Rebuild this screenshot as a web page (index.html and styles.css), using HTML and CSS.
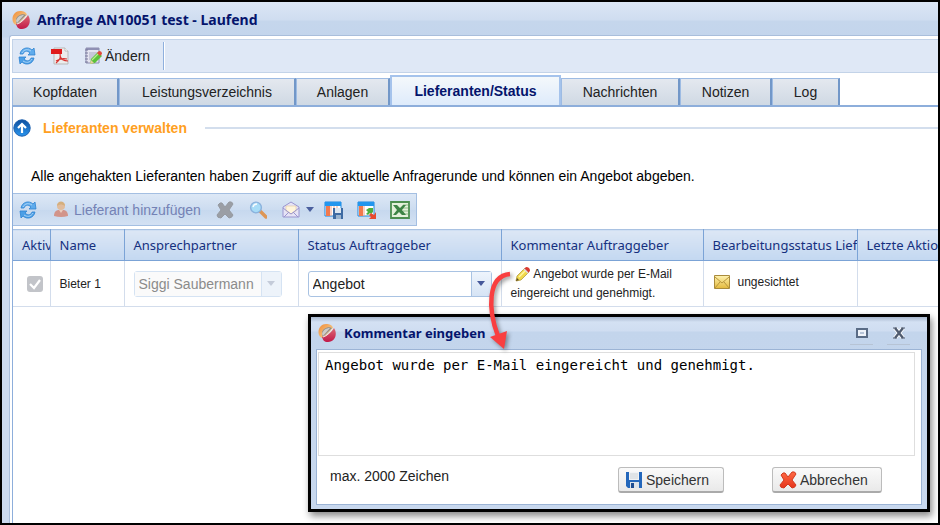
FILE: index.html
```html
<!DOCTYPE html>
<html lang="de">
<head>
<meta charset="utf-8">
<title>Anfrage AN10051 test - Laufend</title>
<link rel="stylesheet" href="styles.css">
</head>
<body>
<svg class="defs" aria-hidden="true">
  <defs>
    <linearGradient id="gOrange" x1="0" y1="0" x2="1" y2="1"><stop offset="0" stop-color="#ef8a35"/><stop offset=".6" stop-color="#f5be78"/><stop offset="1" stop-color="#d9c3a2"/></linearGradient>
    <linearGradient id="gRed" x1="0" y1="0" x2="0" y2="1"><stop offset="0" stop-color="#dc6a74"/><stop offset="1" stop-color="#c21848"/></linearGradient>
    <linearGradient id="gBall" x1="0" y1="0" x2="0" y2="1"><stop offset="0" stop-color="#0e4f9e"/><stop offset="1" stop-color="#2a95ee"/></linearGradient>
    <linearGradient id="gMail" x1="0" y1="0" x2="0" y2="1"><stop offset="0" stop-color="#fff3b0"/><stop offset="1" stop-color="#e3b93c"/></linearGradient>
    <linearGradient id="gCross" x1="0" y1="0" x2="0" y2="1"><stop offset="0" stop-color="#ff6a45"/><stop offset="1" stop-color="#e5341a"/></linearGradient>
  </defs>
  <symbol id="logo" viewBox="0 0 18 18">
    <path d="M1 11C-1 5 3 0 8 0c4 0 6 1 7 4L5 14c-2 0-3-1-4-3z" fill="url(#gOrange)"/>
    <path d="M4 9c0-4 6-7 10-5L5 13c-1-1-1-2-1-4z" fill="#8f8d8b"/>
    <path d="M4 10c1-4 4-6 8-6L5 12z" fill="#cfccc8"/>
    <path d="M16 4c4 6 1 14-6 14-4 0-5-2-6-5C8 12 14 8 16 4z" fill="url(#gRed)"/>
    <path d="M14.500 4.500C13 8 9 12 5 13" fill="none" stroke="#f4ebe6" stroke-width="1"/>
  </symbol>
  <symbol id="refresh" viewBox="0 0 18 18">
    <path d="M2 7C3 1 10-1 14 3l2-2 1 7h-7l2-2C9 3 6 4 5 7z" fill="#5fabec" stroke="#2f84d2" stroke-width=".8"/>
    <path d="M16 11c-1 6-8 8-12 4l-2 2-1-7h7l-2 2c3 3 6 2 7-1z" fill="#4c9fe6" stroke="#2f84d2" stroke-width=".8"/>
    <path d="M4 6c2-4 6-4 9-2M14 12c-2 4-6 4-9 2" fill="none" stroke="#a9d4f7"/>
  </symbol>
  <symbol id="floppy" viewBox="0 0 18 18">
    <path d="M1 1h16v16H3l-2-2z" fill="#2467bb"/>
    <path d="M4 1h10v8H4z" fill="#f1f3f5"/><path d="M5 3h8M5 5h8M5 7h8" stroke="#c6cbd0" stroke-width=".8"/>
    <path d="M5 11h9v6H5z" fill="#dce3ea"/><path d="M6 12h3v5H6z" fill="#1d4c91"/>
  </symbol>
  <symbol id="cross" viewBox="0 0 18 18">
    <path d="M2 4q2-3 4-2l3 4 4-5q3-1 4 2l-4 6 4 5q-1 3-4 3l-4-4-4 4q-4 0-4-3l4-5z" stroke-linejoin="round"/>
  </symbol>
</svg>

<div class="window">
  <header class="titlebar">
    <svg class="logo"><use href="#logo"/></svg>
    <h1>Anfrage AN10051 test - Laufend</h1>
  </header>

  <main class="content">
    <div class="toolbar">
      <button class="tool" aria-label="Aktualisieren"><svg class="icon"><use href="#refresh"/></svg></button>
      <button class="tool" aria-label="PDF">
        <svg class="icon" viewBox="0 0 18 18"><path d="M3 1h11l3 3v13H3z" fill="#ececec" stroke="#b9b9b9"/><path d="M14 1v3h3" fill="#fff" stroke="#aaa" stroke-width=".7"/><path d="M0 2h11v5H0z" fill="#e01b1b"/><path d="M9 7c1 4-1 7-4 9M9 9c1 3 4 5 8 5M5 14c3-2 7-3 11-2" fill="none" stroke="#d8302c" stroke-width="1.200"/></svg>
      </button>
      <button class="tool tool-text">
        <svg class="icon" viewBox="0 0 18 18"><path d="M2 1h13v15H2z" fill="#e4e4f0" stroke="#8c8cae"/><path d="M2 1h13v2H2z" fill="#8f90b4"/><path d="M1 3h3M1 6h3M1 9h3M1 12h3M1 15h3" stroke="#77789b"/><path d="M5 6h8M5 8h7M5 10h5M5 12h3" stroke="#a9aac2"/><path d="M6 17l1-5 7-7 4 4-7 7z" fill="#5cc13a"/><path d="M8 13l7-7" stroke="#b5ee8c" stroke-width="1.3"/><path d="M13 6l2-2q3 0 3 3l-2 2z" fill="#e04a3c"/><path d="M6 17l1-4 3 3z" fill="#e5cf9d"/></svg>
        Ändern
      </button>
      <span class="separator"></span>
    </div>

    <nav class="tabs">
      <button class="tab tab-kopf">Kopfdaten</button>
      <button class="tab tab-leist">Leistungsverzeichnis</button>
      <button class="tab tab-anl">Anlagen</button>
      <button class="tab tab-status active">Lieferanten/Status</button>
      <button class="tab tab-nachr">Nachrichten</button>
      <button class="tab tab-notiz">Notizen</button>
      <button class="tab tab-log">Log</button>
    </nav>

    <section class="panel">
      <div class="legend">
        <svg class="collapse" viewBox="0 0 18 18"><circle cx="9" cy="9" r="8.2" fill="url(#gBall)" stroke="#1b5fae"/><path d="M9 14V5M5 9l4-4 4 4" fill="none" stroke="#fff" stroke-width="2.2"/></svg>
        <h2>Lieferanten verwalten</h2>
        <span class="rule"></span>
      </div>
      <p class="hint">Alle angehakten Lieferanten haben Zugriff auf die aktuelle Anfragerunde und können ein Angebot abgeben.</p>

      <div class="gridbar">
        <button class="tool" aria-label="Aktualisieren"><svg class="icon"><use href="#refresh"/></svg></button>
        <button class="tool add" disabled>
          <svg class="icon" viewBox="0 0 18 18"><path d="M2 15c0-4 2-6 5-6h4c3 0 5 2 5 6q-7 2-14 0z" fill="#d38d80"/><path d="M7 9l2 3 2-3z" fill="#efcbb9"/><circle cx="9" cy="5" r="4" fill="#e3b994"/><path d="M5 5c0-6 8-6 8 0-3-2-5-2-8 0z" fill="#d5aa72"/></svg>
          Lieferant hinzufügen
        </button>
        <button class="tool" aria-label="Löschen" disabled><svg class="icon" fill="#9a9ea5" stroke="#969aa1"><use href="#cross"/></svg></button>
        <button class="tool search" aria-label="Suchen">
          <svg class="icon" viewBox="0 0 18 18"><path d="M11 10l6 6" stroke="#e08f45" stroke-width="3.500" stroke-linecap="round"/><circle cx="7" cy="6.500" r="5.400" fill="#a3dcf8" stroke="#84addb" stroke-width="1.400"/><path d="M4 6q1-3 4-3" fill="none" stroke="#fff" stroke-width="1.500"/></svg>
        </button>
        <button class="tool mail" aria-label="E-Mail">
          <svg class="icon" viewBox="0 0 18 18"><path d="M1 6l8-5 8 5v10H1z" fill="#e6e3f6" stroke="#9a95cf"/><path d="M4 5h10v5l-5 3-5-3z" fill="#fff5dc" stroke="#e0c79d" stroke-width=".6"/><path d="M1 7l8 6 8-6M2 16l5-5M16 16l-5-5" fill="none" stroke="#9a95cf"/></svg>
          <svg class="caret" viewBox="0 0 8 5"><path d="M0 0h8L4 5z" fill="#4b5f9e"/></svg>
        </button>
        <div class="views">
          <button class="tool" aria-label="Ansicht speichern">
            <svg class="icon wide" viewBox="0 0 20 18"><path d="M1 1h16v14H1z" fill="#fff" stroke="#1e87dd"/><path d="M1 1h16v4H1z" fill="#2296ee"/><path d="M2 5h4v10H2z" fill="#f2794c"/><path d="M7 5v10M10 5v10M13 5v10" stroke="#f2a58a"/><path d="M9 7h10v11H9z" fill="#3e6ba3"/><path d="M11 7h6v5h-6z" fill="#dde7f1"/><path d="M12 14h5v4h-5z" fill="#9bb4cf"/></svg>
          </button>
          <button class="tool" aria-label="Ansicht zurücksetzen">
            <svg class="icon wide" viewBox="0 0 20 18"><path d="M1 1h16v14H1z" fill="#fff" stroke="#1e87dd"/><path d="M1 1h16v4H1z" fill="#2296ee"/><path d="M2 5h4v10H2z" fill="#f2794c"/><path d="M7 5v10" stroke="#f2a58a"/><path d="M9 13l2-2-2-2 3-2h4v4l-2 2-1-1-2 2z" fill="#4cae3d"/><path d="M19 11v7h-7l2-2-2-2 2-2 3 2z" fill="#e84a2e"/></svg>
          </button>
          <button class="tool" aria-label="Excel">
            <svg class="icon wide" viewBox="0 0 20 18"><path d="M1 1h18v16H1z" fill="#e4f1dc" stroke="#4c8f50" stroke-width="1.800"/><path d="M13 4h5M13 7h5M13 10h5M13 13h5" stroke="#8dba87"/><path d="M3 4h4l3 3 3-3h3l-4 5 4 5h-4l-3-3-3 3H3l4-5z" fill="#3d8446"/></svg>
          </button>
        </div>
      </div>

      <table class="grid">
        <colgroup><col class="c-aktiv"><col class="c-name"><col class="c-partner"><col class="c-status"><col class="c-komm"><col class="c-bearb"><col></colgroup>
        <thead>
          <tr><th>Aktiv</th><th>Name</th><th>Ansprechpartner</th><th>Status Auftraggeber</th><th>Kommentar Auftraggeber</th><th>Bearbeitungsstatus Lieferant</th><th>Letzte Aktion</th></tr>
        </thead>
        <tbody>
          <tr>
            <td class="check"><label><input type="checkbox" checked disabled aria-label="Aktiv"><svg viewBox="0 0 16 16"><path d="M3 8l4 4 6-8" fill="none" stroke="#fff" stroke-width="2.200"/></svg></label></td>
            <td>Bieter 1</td>
            <td><div class="combo off"><select aria-label="Ansprechpartner" disabled><option>Siggi Saubermann</option></select><span class="trigger"><svg class="caret" viewBox="0 0 8 5"><path d="M0 0h8L4 5z" fill="#a9b2c4"/></svg></span></div></td>
            <td><div class="combo"><select aria-label="Status Auftraggeber"><option>Angebot</option></select><span class="trigger"><svg class="caret" viewBox="0 0 8 5"><path d="M0 0h8L4 5z" fill="#45589a"/></svg></span></div></td>
            <td class="comment"><svg class="pencil" viewBox="0 0 16 16"><path d="M1 15l1-5 8-8 4 4-8 8z" fill="#f1d84b" stroke="#a99133" stroke-width=".7"/><path d="M4 11l7-7" stroke="#fff6a8" stroke-width="1.500"/><path d="M9 3l2-2q4 0 4 4l-2 2z" fill="#d93b32"/><path d="M9 3l4 4" stroke="#ddd" stroke-width="1.500"/><path d="M1 15l1-3 2 2z" fill="#5d4a22"/></svg> Angebot wurde per E-Mail eingereicht und genehmigt.</td>
            <td><div class="state"><svg viewBox="0 0 16 14"><path d="M.5.500h15v13H.5z" fill="url(#gMail)" stroke="#a98b3c"/><path d="M1 2l7 6 7-6M1 13l5-6M15 13l-5-6" fill="none" stroke="#b8963c"/></svg>ungesichtet</div></td>
            <td></td>
          </tr>
        </tbody>
      </table>
    </section>
  </main>

  <section class="dialog" role="dialog" aria-labelledby="dialog-title">
    <header class="dialog-head">
      <svg class="logo"><use href="#logo"/></svg>
      <h2 id="dialog-title">Kommentar eingeben</h2>
      <button class="win" aria-label="Maximieren"><svg viewBox="0 0 12 12"><path d="M1 2h10v8H1z" fill="#eef3fa" stroke="#5a6c86" stroke-width="2"/><path d="M4 5h4v2H4z" fill="#b6c4d8"/></svg></button>
      <button class="win" aria-label="Schließen"><svg viewBox="0 0 12 12"><path d="M2 1l8 10M10 1L2 11" stroke="#fff" stroke-width="4"/><path d="M2 1l8 10M10 1L2 11" stroke="#505c70" stroke-width="2.400"/><path d="M0 1h4M8 1h4M0 11h4M8 11h4" stroke="#505c70" stroke-width="1.200"/></svg></button>
    </header>
    <div class="dialog-body">
      <textarea aria-label="Kommentar" spellcheck="false">Angebot wurde per E-Mail eingereicht und genehmigt.</textarea>
      <footer>
        <span class="limit">max. 2000 Zeichen</span>
        <button class="action save"><svg class="icon"><use href="#floppy"/></svg>Speichern</button>
        <button class="action cancel"><svg class="icon" fill="url(#gCross)" stroke="#d13a20"><use href="#cross"/></svg>Abbrechen</button>
      </footer>
    </div>
  </section>

  <svg class="arrow" viewBox="0 0 40 90" aria-hidden="true"><path d="M32 10C9 12 10 46 20 72" fill="none" stroke="#f93f40" stroke-width="4.500"/><path d="M12 73l17-6-3 18z" fill="#f93f40"/></svg>
</div>
</body>
</html>
```
FILE: styles.css
```css
* { box-sizing: border-box; }

body {
  margin: 0;
  font: 14px/16px "Liberation Sans", Arial, sans-serif;
  color: #222;
}

h1, h2, p { margin: 0; }
button { font: inherit; color: inherit; }
svg { display: block; flex: none; }
.defs { position: absolute; width: 0; height: 0; }

.window {
  position: relative;
  min-height: 100vh;
  display: flex;
  flex-direction: column;
  overflow: hidden;
  border: 2px solid #000;
  padding-left: 7px;
  background: linear-gradient(#dbe6f5 0, #cfddf0 18px, #c5d6ec 19px, #c3d5ec 35px, #cbdaef 36px);
}

.titlebar {
  display: flex;
  align-items: center;
  gap: 7px;
  height: 33px;
  padding: 2px 3px 0;
}

.logo { width: 18px; height: 18px; }

h1, .dialog h2 {
  font: bold 14px/18px "Noto Sans", "Open Sans", sans-serif;
  color: #04146c;
}

.dialog h2 { font-size: 13px; }

.content {
  flex: 1;
  display: flex;
  flex-direction: column;
  min-width: 0;
  padding: 3px 0 0 2px;
  border: 1px solid #a9bedb;
  border-width: 1px 0 0 1px;
  border-top-left-radius: 3px;
  background: #fff;
}

.toolbar {
  display: flex;
  align-items: center;
  height: 34px;
  padding: 0 5px;
  gap: 15px;
  background: #dfe8f6;
  border: 1px solid #c3d3e8;
  border-right: 0;
}

.tool {
  display: flex;
  align-items: center;
  gap: 4px;
  padding: 0;
  border: 0;
  background: none;
}

.tool-text { gap: 3px; }

.icon { width: 18px; height: 18px; }
.icon.wide { width: 20px; }
.caret { width: 8px; height: 5px; }

.separator {
  width: 2px;
  height: 28px;
  margin-left: -2px;
  background: #fff;
  border-left: 1px solid #8fb0de;
}

.tabs {
  display: flex;
  align-items: flex-end;
  height: 34px;
  border-bottom: 2px solid #8daedb;
}

.tab {
  height: 27px;
  padding: 0;
  border: 1px solid #9dbbe3;
  border-right: 2px solid #7297c8;
  border-bottom: 0;
  background: linear-gradient(#e4e8ef, #cfd9e4);
}

.tab-kopf { width: 107px; }
.tab-leist { width: 177px; }
.tab-anl { width: 94px; }
.tab-status { width: 171px; }
.tab-nachr { width: 119px; }
.tab-notiz { width: 92px; }
.tab-log { width: 68px; }

.tab.active {
  height: 30px;
  border: 2px solid #a5c3ec;
  border-bottom: 0;
  background: linear-gradient(#f4f8fb, #deebfb);
  color: #04146c;
  font-weight: bold;
}

.panel {
  flex: 1;
  border-left: 1px solid #8daedb;
}

.legend {
  display: flex;
  align-items: center;
  height: 42px;
  gap: 12px;
}

.collapse { width: 18px; height: 18px; }
.legend h2 { font-size: 14px; line-height: 16px; color: #ff9f22; }
.rule { flex: 1; height: 2px; margin-left: 6px; background: #d3deed; }

.hint { padding: 19px 18px 9px; color: #000; }

.gridbar {
  display: inline-flex;
  align-items: center;
  height: 33px;
  padding: 0 6px;
  gap: 15px;
  border: 1px solid #a4bfe2;
  border-left: 0;
  background: linear-gradient(#dde8f6, #ccdcf0 50%, #c6d8ee 51%, #d3e1f3);
  vertical-align: top;
}

.add { color: #7482b5; }
.add .icon, .search .icon { opacity: .9; }
.mail { gap: 6px; margin-right: -5px; }
.views { display: flex; gap: 13px; }

.grid {
  width: 100%;
  margin-top: 3px;
  table-layout: fixed;
  border-collapse: collapse;
}

.c-aktiv { width: 37px; }
.c-name { width: 74px; }
.c-partner { width: 174px; }
.c-status { width: 203px; }
.c-komm { width: 202px; }
.c-bearb { width: 154px; }

.grid th {
  height: 31px;
  padding: 0 0 0 9px;
  overflow: hidden;
  white-space: nowrap;
  text-align: left;
  font: 13px/18px "Noto Sans", "Open Sans", sans-serif;
  color: #15307f;
  border: 1px solid #7ba3d6;
  border-left: 0;
  border-top-color: #a9c2e2;
  background: linear-gradient(#dce7f5, #c3d8f1);
}

.grid td {
  height: 46px;
  padding: 0 9px;
  font-size: 12px;
  border: 1px solid #d3ddec;
  border-left: 0;
  border-top: 0;
}

.grid th:last-child, .grid td:last-child { border-right: 0; }

.check label {
  position: relative;
  display: block;
  width: 16px;
  height: 16px;
  margin-left: 5px;
}

.check input {
  appearance: none;
  display: block;
  width: 16px;
  height: 16px;
  margin: 0;
  border-radius: 3px;
  background: #c2c4c9;
}

.check svg { position: absolute; inset: 0; }

.combo {
  display: flex;
  width: 184px;
  height: 26px;
  border: 1px solid #a9c3e3;
  border-radius: 3px;
  background: #fff;
}

.combo.off { width: 148px; border-color: #d5e3f3; }

.combo select {
  appearance: none;
  flex: 1;
  min-width: 0;
  margin: 0;
  padding: 0 4px;
  border: 0;
  background: none;
  font: 14px/16px "Liberation Sans", Arial, sans-serif;
  color: #222;
}

.combo.off select { color: #8b8b8b; background: #fafafa; opacity: 1; }

.trigger {
  display: grid;
  place-items: center;
  width: 20px;
  border-left: 1px solid #a9c3e3;
  background: linear-gradient(#eef4fc, #d6e4f5);
}

.off .trigger { border-color: #d5e3f3; background: #edf3fa; }
.off .caret { opacity: .6; }

.grid .comment { line-height: 19px; padding-right: 16px; }
.pencil { display: inline-block; width: 16px; height: 16px; margin-left: 4px; vertical-align: middle; }

.state { display: flex; align-items: center; gap: 8px; padding: 0 1px 4px; }
.state svg { width: 16px; height: 14px; }

.dialog {
  position: absolute;
  left: 306px;
  right: 8px;
  top: 312px;
  padding: 0 5px 4px;
  border: 3px solid #000;
  background: linear-gradient(#a5b5cc 0, #d4e1f3 5px, #cfddf1 14px, #c3d5ec 15px, #c8d8ee);
  box-shadow: 2px 4px 7px #0007;
}

.dialog-head {
  display: flex;
  align-items: center;
  gap: 8px;
  height: 32px;
  padding: 0 12px 0 2px;
}

.dialog-head h2 { flex: 1; }

.win {
  display: grid;
  place-items: center;
  width: 23px;
  height: 24px;
  margin-left: 6px;
  padding: 0;
  border: 0;
  border-bottom: 1px solid #b7c4d5;
  background: none;
}

.win svg { width: 12px; height: 12px; }

.dialog-body {
  padding: 2px 6px 0 1px;
  border: 1px solid #9cb4d5;
  background: #fff;
}

textarea {
  display: block;
  width: 100%;
  height: 104px;
  padding: 3px 6px;
  resize: none;
  border: 1px solid #dedede;
  font: 14px/18px "DejaVu Sans Mono", monospace;
  color: #000;
  outline: 0;
}

footer {
  display: flex;
  align-items: center;
  height: 48px;
  padding: 0 33px 0 12px;
}

.limit { flex: 1; padding-bottom: 8px; }

.action {
  display: flex;
  align-items: center;
  gap: 3px;
  height: 26px;
  padding: 0 7px 0 6px;
  border: 1px solid #bcbcbc;
  border-bottom: 2px solid #aaa;
  border-radius: 3px;
  background: linear-gradient(#fafafa, #e9e9e9);
  color: #333;
}

.save { width: 106px; margin-right: 48px; }
.cancel { width: 110px; }

.arrow {
  position: absolute;
  left: 476px;
  top: 262px;
  width: 40px;
  height: 90px;
  filter: drop-shadow(2px 2px 2px #0006);
}
```
